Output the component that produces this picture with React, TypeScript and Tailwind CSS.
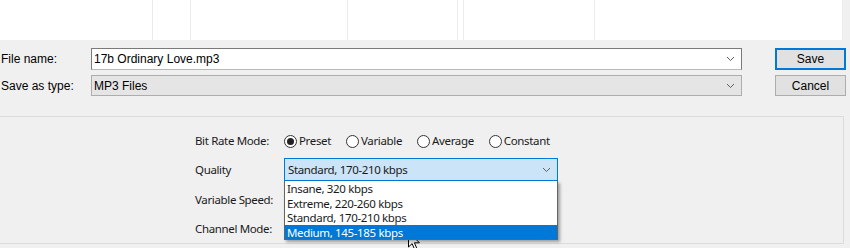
import * as React from 'react';

const COLS = [153, 38, 157, 110, 6, 131, 248];

const QUALITY = [
  'Insane, 320 kbps',
  'Extreme, 220-260 kbps',
  'Standard, 170-210 kbps',
  'Medium, 145-185 kbps',
];

function Chevron() {
  return (
    <svg width="9" height="6" viewBox="0 0 9 6" fill="none">
      <path d="M1 1l3.5 3.5L8 1" stroke="#606060" strokeWidth="1" />
    </svg>
  );
}

function Radio({ label, checked }: { label: string; checked?: boolean }) {
  return (
    <div className="flex items-center gap-[2px]">
      <span className="w-[13px] h-[13px] rounded-full border border-[#333] bg-white flex items-center justify-center">
        {checked && <span className="w-[7px] h-[7px] rounded-full bg-[#222]" />}
      </span>
      <span>{label}</span>
    </div>
  );
}

function Cursor() {
  return (
    <svg width="13" height="20" viewBox="0 0 13 20" className="absolute left-[408px] top-[231px]">
      <path
        d="M0.5 0.5v15.5l3.6-3.4 2.6 6 2.2-1-2.5-5.8h5z"
        fill="#fff"
        stroke="#000"
        strokeWidth="1"
        strokeLinejoin="round"
      />
    </svg>
  );
}

export default function App() {
  return (
    <div className="relative w-[850px] h-[248px] overflow-hidden bg-[#f0f0f0] text-[12px] text-black font-['Liberation_Sans',Arial,sans-serif]">
      {/* file list remnants */}
      <div className="h-[40px] w-[843px] bg-white flex">
        {COLS.map((w, i) => (
          <div key={i} style={{ width: w }} className="h-full border-r border-[#ececec]" />
        ))}
      </div>

      {/* name / type rows */}
      <div className="flex h-[76px] pt-[8px]">
        <div className="w-[91px] pl-[1px] flex flex-col">
          <div className="h-[22px] flex items-center">File name:</div>
          <div className="h-[21px] mt-[5px] flex items-center">Save as type:</div>
        </div>
        <div className="w-[651px] flex flex-col">
          <div className="h-[22px] bg-white border border-[#7a7a7a] border-b-[#b8b8b8] flex items-center justify-between pl-[2px] pr-[6px]">
            <span>17b Ordinary Love.mp3</span>
            <Chevron />
          </div>
          <div className="h-[21px] mt-[5px] bg-[#e5e5e5] border border-[#adadad] flex items-center justify-between pl-[2px] pr-[6px]">
            <span>MP3 Files</span>
            <Chevron />
          </div>
        </div>
        <div className="ml-[33px] w-[71px] flex flex-col">
          <div className="h-[22px] bg-[#e1e1e1] border-2 border-[#0078d7] flex items-center justify-center">Save</div>
          <div className="h-[21px] mt-[5px] bg-[#e1e1e1] border border-[#adadad] flex items-center justify-center">Cancel</div>
        </div>
      </div>

      {/* options panel */}
      <div className="w-[844px] h-[128px] border-t border-r border-b border-[#dcdcdc] pt-[15px] pl-[195px] font-['Noto_Sans',sans-serif] text-[11.5px] tracking-[-0.35px] text-[#1a1a1a]">
        <div className="flex items-center h-[18px]">
          <div className="w-[89px]">Bit Rate Mode:</div>
          <div className="flex items-center gap-[15px]">
            <Radio label="Preset" checked />
            <Radio label="Variable" />
            <Radio label="Average" />
            <Radio label="Constant" />
          </div>
        </div>

        <div className="flex items-center h-[23px] mt-[8px]">
          <div className="w-[89px]">Quality</div>
          <div className="relative w-[274px] h-full">
            <div className="h-full bg-[#cce4f7] border border-[#0078d7] flex items-center justify-between pl-[3px] pr-[6px]">
              <span>Standard, 170-210 kbps</span>
              <Chevron />
            </div>
            <div className="absolute left-0 top-full w-[274px] bg-white border border-[#646464] border-t-0 shadow-[2px_2px_3px_rgba(0,0,0,0.35)] z-10">
              {QUALITY.map((q, i) => (
                <div
                  key={q}
                  className={
                    i === QUALITY.length - 1
                      ? 'h-[14.5px] leading-[16px] pl-[2px] bg-[#0078d7] text-white'
                      : 'h-[14.5px] leading-[16px] pl-[2px]'
                  }
                >
                  {q}
                </div>
              ))}
            </div>
          </div>
        </div>

        <div className="flex items-center h-[18px] mt-[10px]">
          <div className="w-[89px]">Variable Speed:</div>
        </div>

        <div className="flex items-center h-[18px] mt-[11px]">
          <div className="w-[89px]">Channel Mode:</div>
        </div>
      </div>

      <Cursor />
    </div>
  );
}
